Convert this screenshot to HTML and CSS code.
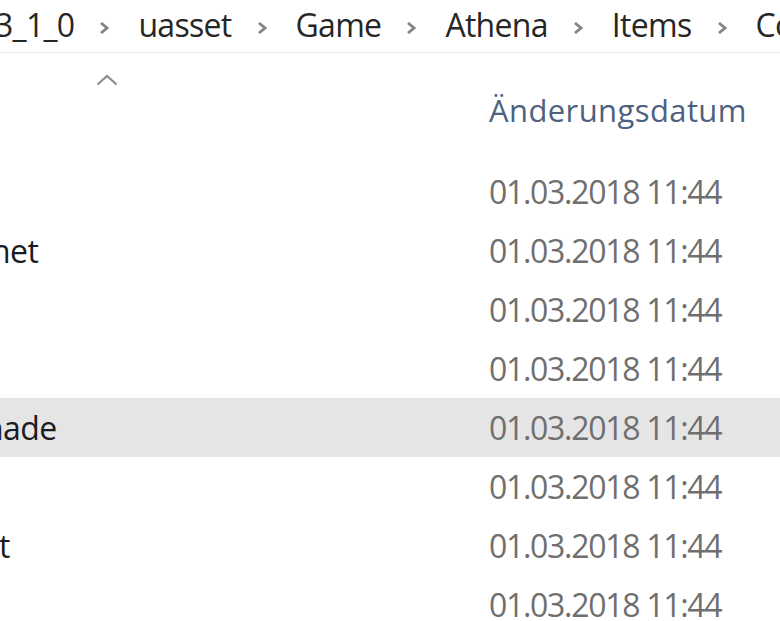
FILE: index.html
```html
<!DOCTYPE html>
<html lang="de">
<head>
  <meta charset="UTF-8">
  <meta name="viewport" content="width=device-width, initial-scale=1.0">
  <title>Items</title>
  <link rel="stylesheet" href="styles.css">
</head>
<body>

  <div class="explorer">
    <nav class="crumbs">
      <span class="crumb first">3_1_0</span>
      <svg class="sep" viewBox="0 0 10 12"><path d="M2 1 L8 6 L2 11"/></svg>
      <span class="crumb">uasset</span>
      <svg class="sep" viewBox="0 0 10 12"><path d="M2 1 L8 6 L2 11"/></svg>
      <span class="crumb">Game</span>
      <svg class="sep" viewBox="0 0 10 12"><path d="M2 1 L8 6 L2 11"/></svg>
      <span class="crumb">Athena</span>
      <svg class="sep" viewBox="0 0 10 12"><path d="M2 1 L8 6 L2 11"/></svg>
      <span class="crumb">Items</span>
      <svg class="sep" viewBox="0 0 10 12"><path d="M2 1 L8 6 L2 11"/></svg>
      <span class="crumb">Cosmetics</span>
    </nav>

    <div class="columns">
      <div class="col-name">
        <svg class="sort" viewBox="0 0 22 12"><path d="M1.5 10.5 L11 2 L20.5 10.5"/></svg>
      </div>
      <div class="col-date">Änderungsdatum</div>
    </div>

    <div class="list">
      <div class="row">
        <div class="name"><span></span></div>
        <div class="date">01.03.2018 11:44</div>
      </div>
      <div class="row">
        <div class="name"><span class="cut-net">net</span></div>
        <div class="date">01.03.2018 11:44</div>
      </div>
      <div class="row">
        <div class="name"><span></span></div>
        <div class="date">01.03.2018 11:44</div>
      </div>
      <div class="row">
        <div class="name"><span></span></div>
        <div class="date">01.03.2018 11:44</div>
      </div>
      <div class="row selected">
        <div class="name"><span class="cut-nade">nade</span></div>
        <div class="date">01.03.2018 11:44</div>
      </div>
      <div class="row">
        <div class="name"><span></span></div>
        <div class="date">01.03.2018 11:44</div>
      </div>
      <div class="row">
        <div class="name"><span class="cut-t">t</span></div>
        <div class="date">01.03.2018 11:44</div>
      </div>
      <div class="row">
        <div class="name"><span></span></div>
        <div class="date">01.03.2018 11:44</div>
      </div>
    </div>
  </div>

</body>
</html>
```

FILE: styles.css
```css
body {
  margin: 0;
  padding: 0;
  background-color: #fff;
  font-family: 'Open Sans', 'Noto Sans', sans-serif;
  overflow: hidden;
}

.explorer {
  width: 780px;
  height: 621px;
  overflow: hidden;
}

/* Address bar */
.crumbs {
  display: flex;
  align-items: center;
  height: 53px;
  padding-bottom: 3px;
  box-sizing: border-box;
  border-bottom: 1px solid #ededed;
  white-space: nowrap;
  font-size: 32px;
  letter-spacing: -0.7px;
  color: #262626;
}

.crumb.first {
  margin-left: -5px;
}

.sep {
  width: 10px;
  height: 12px;
  margin: 6px 29px 0 25px;
  flex-shrink: 0;
}

.sep path {
  fill: none;
  stroke: #858585;
  stroke-width: 2.8;
}

/* Column headers */
.columns {
  display: flex;
  height: 109px;
}

.col-name {
  width: 489px;
  flex-shrink: 0;
}

.sort {
  display: block;
  width: 22px;
  height: 12px;
  margin: 21px 0 0 96px;
}

.sort path {
  fill: none;
  stroke: #8c8c8c;
  stroke-width: 2.2;
}

.col-date {
  padding-top: 32px;
  line-height: 50px;
  height: 50px;
  font-size: 31px;
  letter-spacing: 0.4px;
  color: #4e6180;
}

/* File rows */
.row {
  display: flex;
  height: 59px;
  line-height: 59px;
  font-size: 32px;
}

.row.selected {
  background-color: #e5e5e5;
}

.name {
  width: 489px;
  flex-shrink: 0;
  overflow: hidden;
  white-space: nowrap;
  color: #1b1b24;
  letter-spacing: -0.6px;
}

.cut-net {
  margin-left: -9px;
}

.cut-nade {
  margin-left: -16px;
}

.cut-t {
  margin-left: -1px;
}

.date {
  color: #6f6f6f;
  letter-spacing: -1.3px;
  white-space: nowrap;
}
```
